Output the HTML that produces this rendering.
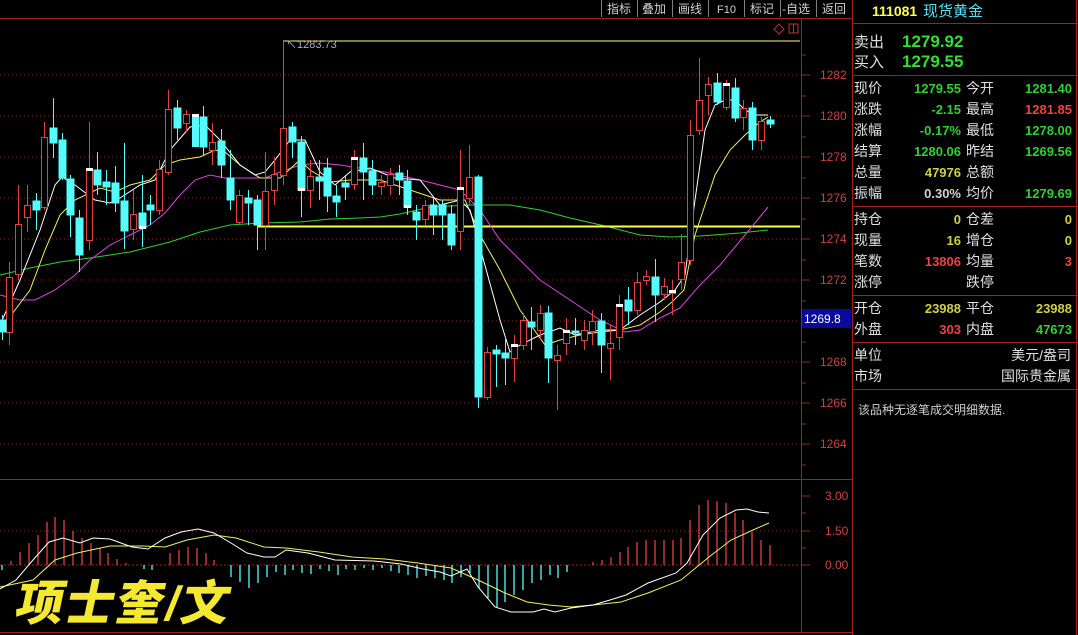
<!DOCTYPE html>
<html><head><meta charset="utf-8"><style>
html,body{margin:0;padding:0;background:#000;width:1078px;height:635px;overflow:hidden}
svg{display:block}
text{font-family:"Liberation Sans","Noto Sans CJK SC",sans-serif}
</style></head><body>
<svg width="1078" height="635" viewBox="0 0 1078 635" xmlns="http://www.w3.org/2000/svg">
<rect width="1078" height="635" fill="#000"/>
<!-- top menu -->
<g stroke="#808080" stroke-width="1">
<line x1="601.5" y1="0" x2="601.5" y2="17"/><line x1="637.5" y1="0" x2="637.5" y2="17"/><line x1="672.5" y1="0" x2="672.5" y2="17"/><line x1="708.5" y1="0" x2="708.5" y2="17"/><line x1="744.5" y1="0" x2="744.5" y2="17"/><line x1="780.5" y1="0" x2="780.5" y2="17"/><line x1="816.5" y1="0" x2="816.5" y2="17"/>
</g>
<g fill="#d0d0d0" font-size="12">
<text x="607" y="13">指标</text><text x="642" y="13">叠加</text><text x="678" y="13">画线</text><text x="717" y="13" font-size="11">F10</text><text x="750" y="13">标记</text><text x="782" y="13">-自选</text><text x="822" y="13">返回</text>
</g>
<line x1="0" y1="18.5" x2="852" y2="18.5" stroke="#a02020"/>
<!-- small icons -->
<path d="M779 24 L784 29 L779 34 L774 29 Z" fill="none" stroke="#c03030"/>
<rect x="789" y="24" width="9" height="9" fill="none" stroke="#c03030"/><line x1="793.5" y1="24" x2="793.5" y2="33" stroke="#c03030"/>
<!-- grid -->
<g stroke="#902020" stroke-dasharray="1,3">
<line x1="0" y1="75" x2="800" y2="75"/><line x1="0" y1="116" x2="800" y2="116"/><line x1="0" y1="157" x2="800" y2="157"/><line x1="0" y1="198" x2="800" y2="198"/><line x1="0" y1="239" x2="800" y2="239"/><line x1="0" y1="280" x2="800" y2="280"/><line x1="0" y1="321" x2="800" y2="321"/><line x1="0" y1="362" x2="800" y2="362"/><line x1="0" y1="403" x2="800" y2="403"/><line x1="0" y1="444" x2="800" y2="444"/>
<line x1="0" y1="531" x2="800" y2="531"/>
</g>
<line x1="0" y1="565" x2="800" y2="565" stroke="#a02020" stroke-dasharray="2,2"/>
<!-- axes -->
<line x1="801.5" y1="19" x2="801.5" y2="633" stroke="#a02020"/>
<line x1="0" y1="479.5" x2="852" y2="479.5" stroke="#a02020"/>
<line x1="0" y1="632.5" x2="852" y2="632.5" stroke="#a02020"/>
<g stroke="#a02020">
<line x1="801" y1="55" x2="806" y2="55"/><line x1="801" y1="75" x2="810" y2="75"/><line x1="801" y1="96" x2="806" y2="96"/><line x1="801" y1="116" x2="810" y2="116"/><line x1="801" y1="137" x2="806" y2="137"/><line x1="801" y1="157" x2="810" y2="157"/><line x1="801" y1="178" x2="806" y2="178"/><line x1="801" y1="198" x2="810" y2="198"/><line x1="801" y1="219" x2="806" y2="219"/><line x1="801" y1="239" x2="810" y2="239"/><line x1="801" y1="260" x2="806" y2="260"/><line x1="801" y1="280" x2="810" y2="280"/><line x1="801" y1="301" x2="806" y2="301"/><line x1="801" y1="342" x2="806" y2="342"/><line x1="801" y1="362" x2="810" y2="362"/><line x1="801" y1="383" x2="806" y2="383"/><line x1="801" y1="403" x2="810" y2="403"/><line x1="801" y1="424" x2="806" y2="424"/><line x1="801" y1="444" x2="810" y2="444"/><line x1="801" y1="465" x2="806" y2="465"/>
<line x1="801" y1="496" x2="810" y2="496"/><line x1="801" y1="513" x2="806" y2="513"/><line x1="801" y1="531" x2="810" y2="531"/><line x1="801" y1="548" x2="806" y2="548"/><line x1="801" y1="565" x2="810" y2="565"/>
</g>
<g fill="#d04040" font-size="12">
<text x="820" y="79">1282</text><text x="820" y="120">1280</text><text x="820" y="161">1278</text><text x="820" y="202">1276</text><text x="820" y="243">1274</text><text x="820" y="284">1272</text><text x="820" y="366">1268</text><text x="820" y="407">1266</text><text x="820" y="448">1264</text>
<text x="825" y="500">3.00</text><text x="825" y="535">1.50</text><text x="825" y="569">0.00</text>
</g>
<rect x="802" y="309" width="49" height="19" fill="#0a0a9a"/>
<text x="804" y="323" fill="#fff" font-size="12">1269.8</text>

<!-- MA lines -->
<polyline fill="none" stroke="#30d030" stroke-width="1" points="0,275 30,268 60,262 90,258 130,252 150,247 170,242 200,232 230,225 260,223 300,222 330,219 360,218 380,217 400,214 430,207 470,205 510,205 540,210 570,218 605,226 640,235 670,237 700,236 740,233 768,230"/>
<line x1="258" y1="226.5" x2="800" y2="226.5" stroke="#ffff40" stroke-width="2"/>
<polyline fill="none" stroke="#ffff60" stroke-width="1" points="283,41 800,41"/>
<line x1="283.5" y1="40" x2="283.5" y2="128" stroke="#e04040"/>
<text x="286" y="48" fill="#b0b0b0" font-size="11">↖1283.73</text>
<polyline fill="none" stroke="#e040e0" points="0,295 20,300 35,300 55,290 75,275 90,260 110,245 130,235 150,225 165,213 180,195 195,180 210,175 225,178 245,178 265,178 280,172 300,165 320,163 340,165 360,168 385,172 420,180 460,190 480,210 500,240 540,280 570,300 600,320 625,332 640,330 660,318 680,308 700,285 720,265 745,235 768,207"/>
<polyline fill="none" stroke="#f0f060" points="0,330 30,290 45,250 60,215 75,200 100,188 115,192 130,185 150,180 165,165 180,160 200,157 215,150 225,152 240,165 260,178 280,178 300,160 310,170 330,182 350,180 380,180 410,190 440,200 465,200 480,235 500,270 520,310 545,345 560,340 580,335 600,332 620,330 640,325 660,312 672,302 684,290 695,235 715,175 730,150 745,135 760,122 768,117"/>
<polyline fill="none" stroke="#ffffff" points="0,325 20,280 40,230 55,185 62,177 75,185 95,200 110,203 120,198 140,185 155,180 170,150 190,127 205,125 220,140 240,165 255,175 265,172 275,160 290,140 305,140 320,172 335,185 350,172 370,168 395,178 420,180 440,205 460,200 470,210 478,240 500,320 510,352 520,345 540,335 560,328 575,335 600,330 620,330 640,315 660,302 675,290 685,275 695,200 705,130 715,105 725,100 735,100 745,110 755,115 768,115"/>

<!-- candles: red hollow -->
<g stroke="#e04040" fill="#000">
<line x1="9.5" y1="262" x2="9.5" y2="345"/><rect x="6.5" y="277.5" width="6" height="55"/>
<line x1="18.5" y1="185" x2="18.5" y2="280"/><rect x="15.5" y="224.5" width="6" height="50"/>
<line x1="27.5" y1="185" x2="27.5" y2="232"/><rect x="24.5" y="205.5" width="6" height="12"/>
<line x1="44.5" y1="122" x2="44.5" y2="210"/><rect x="41.5" y="137.5" width="6" height="70"/>
<line x1="89.5" y1="122" x2="89.5" y2="250"/><rect x="86.5" y="168.5" width="6" height="72"/>
<line x1="133.5" y1="190" x2="133.5" y2="240"/><rect x="130.5" y="214.5" width="6" height="15"/>
<line x1="159.5" y1="160" x2="159.5" y2="215"/><rect x="156.5" y="169.5" width="6" height="41"/>
<line x1="168.5" y1="90" x2="168.5" y2="175"/><rect x="165.5" y="109.5" width="6" height="63"/>
<line x1="186.5" y1="110" x2="186.5" y2="132"/><rect x="183.5" y="114.5" width="6" height="9"/>
<line x1="212.5" y1="123" x2="212.5" y2="165"/><rect x="209.5" y="142.5" width="6" height="8"/>
<line x1="239.5" y1="190" x2="239.5" y2="225"/><rect x="236.5" y="195.5" width="6" height="27"/>
<line x1="265.5" y1="152" x2="265.5" y2="250"/><rect x="262.5" y="191.5" width="6" height="34"/>
<line x1="274.5" y1="157" x2="274.5" y2="205"/><rect x="271.5" y="174.5" width="6" height="16"/>
<rect x="280.5" y="128.5" width="6" height="47"/><line x1="283.5" y1="176" x2="283.5" y2="185"/>
<line x1="310.5" y1="160" x2="310.5" y2="208"/><rect x="307.5" y="176.5" width="6" height="14"/>
<line x1="354.5" y1="150" x2="354.5" y2="190"/><rect x="351.5" y="157.5" width="6" height="27"/>
<line x1="381.5" y1="175" x2="381.5" y2="195"/><rect x="378.5" y="182.5" width="6" height="4"/>
<line x1="390.5" y1="168" x2="390.5" y2="195"/><rect x="387.5" y="174.5" width="6" height="11"/>
<line x1="425.5" y1="200" x2="425.5" y2="225"/><rect x="422.5" y="205.5" width="6" height="14"/>
<line x1="460.5" y1="150" x2="460.5" y2="250"/><rect x="457.5" y="187.5" width="6" height="44"/>
<line x1="469.5" y1="145" x2="469.5" y2="205"/><rect x="466.5" y="177.5" width="6" height="21"/>
<line x1="487.5" y1="347" x2="487.5" y2="400"/><rect x="484.5" y="352.5" width="6" height="45"/>
<line x1="514.5" y1="335" x2="514.5" y2="382"/><rect x="511.5" y="344.5" width="6" height="14"/>
<line x1="523.5" y1="313" x2="523.5" y2="350"/><rect x="520.5" y="320.5" width="6" height="25"/>
<line x1="540.5" y1="305" x2="540.5" y2="340"/><rect x="537.5" y="313.5" width="6" height="17"/>
<line x1="557.5" y1="345" x2="557.5" y2="410"/><rect x="554.5" y="355.5" width="6" height="5"/>
<line x1="566.5" y1="318" x2="566.5" y2="355"/><rect x="563.5" y="330.5" width="6" height="13"/>
<line x1="584.5" y1="320" x2="584.5" y2="350"/><rect x="581.5" y="330.5" width="6" height="10"/>
<line x1="592.5" y1="310" x2="592.5" y2="345"/><rect x="589.5" y="321.5" width="6" height="10"/>
<line x1="610.5" y1="325" x2="610.5" y2="380"/><rect x="607.5" y="343.5" width="6" height="5"/>
<line x1="619.5" y1="295" x2="619.5" y2="350"/><rect x="616.5" y="304.5" width="6" height="33"/>
<line x1="637.5" y1="272" x2="637.5" y2="315"/><rect x="634.5" y="282.5" width="6" height="28"/>
<line x1="646.5" y1="270" x2="646.5" y2="285"/><rect x="643.5" y="276.5" width="6" height="4"/>
<line x1="664.5" y1="278" x2="664.5" y2="300"/><rect x="661.5" y="286.5" width="6" height="8"/>
<line x1="672.5" y1="280" x2="672.5" y2="315"/><rect x="669.5" y="290.5" width="6" height="3"/>
<line x1="681.5" y1="234" x2="681.5" y2="290"/><rect x="678.5" y="262.5" width="6" height="17"/>
<line x1="690.5" y1="120" x2="690.5" y2="265"/><rect x="687.5" y="135.5" width="6" height="125"/>
<line x1="699.5" y1="58" x2="699.5" y2="135"/><rect x="696.5" y="100.5" width="6" height="30"/>
<line x1="708.5" y1="77" x2="708.5" y2="115"/><rect x="705.5" y="84.5" width="6" height="11"/>
<line x1="726.5" y1="80" x2="726.5" y2="110"/><rect x="723.5" y="83.5" width="6" height="24"/>
<line x1="743.5" y1="100" x2="743.5" y2="130"/><rect x="740.5" y="108.5" width="6" height="9"/>
<line x1="761.5" y1="117" x2="761.5" y2="150"/><rect x="758.5" y="121.5" width="6" height="19"/>
</g>
<!-- candles: cyan filled -->
<g stroke="#54fcfc" fill="#54fcfc">
<line x1="2.5" y1="315" x2="2.5" y2="340"/><rect x="-1" y="320" width="7" height="12"/>
<line x1="36.5" y1="193" x2="36.5" y2="230"/><rect x="33" y="201" width="7" height="9"/>
<line x1="53.5" y1="98" x2="53.5" y2="158"/><rect x="50" y="128" width="7" height="15"/>
<line x1="62.5" y1="133" x2="62.5" y2="180"/><rect x="59" y="140" width="7" height="38"/>
<line x1="70.5" y1="175" x2="70.5" y2="237"/><rect x="67" y="179" width="7" height="36"/>
<line x1="79.5" y1="210" x2="79.5" y2="272"/><rect x="76" y="218" width="7" height="37"/>
<line x1="97.5" y1="152" x2="97.5" y2="195"/><rect x="94" y="170" width="7" height="15"/>
<line x1="106.5" y1="170" x2="106.5" y2="205"/><rect x="103" y="182" width="7" height="5"/>
<line x1="115.5" y1="166" x2="115.5" y2="212"/><rect x="112" y="183" width="7" height="20"/>
<line x1="124.5" y1="143" x2="124.5" y2="249"/><rect x="121" y="201" width="7" height="30"/>
<line x1="142.5" y1="175" x2="142.5" y2="247"/><rect x="139" y="213" width="7" height="15"/>
<line x1="150.5" y1="195" x2="150.5" y2="225"/><rect x="147" y="205" width="7" height="5"/>
<line x1="177.5" y1="100" x2="177.5" y2="140"/><rect x="174" y="108" width="7" height="20"/>
<line x1="203.5" y1="106" x2="203.5" y2="155"/><rect x="200" y="117" width="7" height="30"/>
<line x1="221.5" y1="129" x2="221.5" y2="178"/><rect x="218" y="141" width="7" height="24"/>
<line x1="230.5" y1="150" x2="230.5" y2="210"/><rect x="227" y="178" width="7" height="22"/>
<line x1="248.5" y1="190" x2="248.5" y2="225"/><rect x="245" y="198" width="7" height="5"/>
<line x1="257.5" y1="195" x2="257.5" y2="250"/><rect x="254" y="200" width="7" height="25"/>
<line x1="292.5" y1="122" x2="292.5" y2="158"/><rect x="289" y="127" width="7" height="15"/>
<line x1="301.5" y1="136" x2="301.5" y2="217"/><rect x="298" y="142" width="7" height="48"/>
<line x1="319.5" y1="160" x2="319.5" y2="200"/><rect x="316" y="177" width="7" height="4"/>
<line x1="327.5" y1="158" x2="327.5" y2="212"/><rect x="324" y="168" width="7" height="28"/>
<line x1="336.5" y1="185" x2="336.5" y2="217"/><rect x="333" y="196" width="7" height="6"/>
<line x1="345.5" y1="175" x2="345.5" y2="200"/><rect x="342" y="183" width="7" height="4"/>
<line x1="363.5" y1="143" x2="363.5" y2="200"/><rect x="360" y="158" width="7" height="14"/>
<line x1="372.5" y1="160" x2="372.5" y2="195"/><rect x="369" y="171" width="7" height="14"/>
<line x1="399.5" y1="165" x2="399.5" y2="195"/><rect x="396" y="173" width="7" height="7"/>
<line x1="407.5" y1="170" x2="407.5" y2="215"/><rect x="404" y="181" width="7" height="26"/>
<line x1="416.5" y1="205" x2="416.5" y2="240"/><rect x="413" y="212" width="7" height="8"/>
<line x1="433.5" y1="198" x2="433.5" y2="235"/><rect x="430" y="205" width="7" height="10"/>
<line x1="442.5" y1="200" x2="442.5" y2="240"/><rect x="439" y="205" width="7" height="10"/>
<line x1="451.5" y1="205" x2="451.5" y2="250"/><rect x="448" y="214" width="7" height="31"/>
<line x1="478.5" y1="175" x2="478.5" y2="408"/><rect x="475" y="177" width="7" height="220"/>
<line x1="496.5" y1="345" x2="496.5" y2="387"/><rect x="493" y="350" width="7" height="4"/>
<line x1="505.5" y1="337" x2="505.5" y2="385"/><rect x="502" y="353" width="7" height="5"/>
<line x1="531.5" y1="307" x2="531.5" y2="350"/><rect x="528" y="322" width="7" height="5"/>
<line x1="548.5" y1="306" x2="548.5" y2="383"/><rect x="545" y="313" width="7" height="45"/>
<line x1="575.5" y1="318" x2="575.5" y2="345"/><rect x="572" y="331" width="7" height="2"/>
<line x1="601.5" y1="313" x2="601.5" y2="373"/><rect x="598" y="321" width="7" height="24"/>
<line x1="628.5" y1="287" x2="628.5" y2="325"/><rect x="625" y="300" width="7" height="11"/>
<line x1="655.5" y1="259" x2="655.5" y2="322"/><rect x="652" y="277" width="7" height="18"/>
<line x1="717.5" y1="73" x2="717.5" y2="105"/><rect x="714" y="83" width="7" height="19"/>
<line x1="735.5" y1="78" x2="735.5" y2="122"/><rect x="732" y="88" width="7" height="30"/>
<line x1="752.5" y1="102" x2="752.5" y2="150"/><rect x="749" y="108" width="7" height="32"/>
<line x1="770.5" y1="116" x2="770.5" y2="128"/><rect x="767" y="120" width="7" height="4"/>
</g>
<g fill="#fff">
<rect x="86" y="168" width="7" height="3"/><rect x="139" y="226" width="7" height="3"/><rect x="192" y="114" width="7" height="3"/><rect x="298" y="188" width="7" height="3"/><rect x="351" y="157" width="7" height="3"/><rect x="404" y="205" width="7" height="3"/><rect x="457" y="187" width="7" height="3"/><rect x="511" y="344" width="7" height="3"/><rect x="563" y="330" width="7" height="3"/><rect x="616" y="304" width="7" height="3"/><rect x="669" y="290" width="7" height="3"/><rect x="723" y="83" width="7" height="3"/>
</g>
<rect x="192" y="114" width="7" height="33" fill="#54fcfc"/><rect x="192" y="114" width="7" height="3" fill="#fff"/>

<!-- MACD histogram -->
<g stroke-width="1.3">
<g stroke="#e04040">
<line x1="11" y1="565" x2="11" y2="561"/><line x1="20" y1="565" x2="20" y2="552"/><line x1="29" y1="565" x2="29" y2="543"/><line x1="38" y1="565" x2="38" y2="535"/><line x1="47" y1="565" x2="47" y2="522"/><line x1="55" y1="565" x2="55" y2="517"/><line x1="64" y1="565" x2="64" y2="520"/><line x1="73" y1="565" x2="73" y2="531"/><line x1="82" y1="565" x2="82" y2="538"/><line x1="91" y1="565" x2="91" y2="543"/><line x1="100" y1="565" x2="100" y2="548"/><line x1="108" y1="565" x2="108" y2="553"/><line x1="117" y1="565" x2="117" y2="559"/><line x1="126" y1="565" x2="126" y2="563"/>
<line x1="170" y1="565" x2="170" y2="553"/><line x1="179" y1="565" x2="179" y2="550"/><line x1="188" y1="565" x2="188" y2="547"/><line x1="197" y1="565" x2="197" y2="548"/><line x1="206" y1="565" x2="206" y2="553"/><line x1="214" y1="565" x2="214" y2="560"/>
<line x1="593" y1="565" x2="593" y2="562"/><line x1="602" y1="565" x2="602" y2="560"/><line x1="611" y1="565" x2="611" y2="557"/><line x1="620" y1="565" x2="620" y2="552"/><line x1="628" y1="565" x2="628" y2="547"/><line x1="637" y1="565" x2="637" y2="542"/><line x1="646" y1="565" x2="646" y2="540"/><line x1="655" y1="565" x2="655" y2="540"/><line x1="664" y1="565" x2="664" y2="540"/><line x1="673" y1="565" x2="673" y2="540"/><line x1="681" y1="565" x2="681" y2="538"/><line x1="690" y1="565" x2="690" y2="520"/><line x1="699" y1="565" x2="699" y2="505"/><line x1="708" y1="565" x2="708" y2="500"/><line x1="717" y1="565" x2="717" y2="501"/><line x1="726" y1="565" x2="726" y2="503"/><line x1="735" y1="565" x2="735" y2="513"/><line x1="743" y1="565" x2="743" y2="520"/><line x1="752" y1="565" x2="752" y2="532"/><line x1="761" y1="565" x2="761" y2="540"/><line x1="770" y1="565" x2="770" y2="545"/>
</g>
<g stroke="#54fcfc">
<line x1="2" y1="565" x2="2" y2="570"/><line x1="144" y1="565" x2="144" y2="569"/><line x1="152" y1="565" x2="152" y2="570"/>
<line x1="231" y1="565" x2="231" y2="577"/><line x1="240" y1="565" x2="240" y2="582"/><line x1="249" y1="565" x2="249" y2="588"/><line x1="258" y1="565" x2="258" y2="583"/><line x1="267" y1="565" x2="267" y2="577"/><line x1="276" y1="565" x2="276" y2="572"/><line x1="285" y1="565" x2="285" y2="575"/><line x1="293" y1="565" x2="293" y2="570"/><line x1="302" y1="565" x2="302" y2="573"/><line x1="311" y1="565" x2="311" y2="574"/><line x1="320" y1="565" x2="320" y2="569"/><line x1="329" y1="565" x2="329" y2="571"/><line x1="338" y1="565" x2="338" y2="575"/><line x1="346" y1="565" x2="346" y2="569"/><line x1="355" y1="565" x2="355" y2="570"/><line x1="364" y1="565" x2="364" y2="568"/><line x1="373" y1="565" x2="373" y2="570"/><line x1="382" y1="565" x2="382" y2="568"/><line x1="391" y1="565" x2="391" y2="571"/><line x1="399" y1="565" x2="399" y2="573"/><line x1="408" y1="565" x2="408" y2="575"/><line x1="417" y1="565" x2="417" y2="578"/><line x1="426" y1="565" x2="426" y2="576"/><line x1="435" y1="565" x2="435" y2="578"/><line x1="444" y1="565" x2="444" y2="580"/><line x1="452" y1="565" x2="452" y2="583"/><line x1="461" y1="565" x2="461" y2="577"/><line x1="470" y1="565" x2="470" y2="573"/>
<line x1="479" y1="565" x2="479" y2="588"/><line x1="488" y1="565" x2="488" y2="598"/><line x1="497" y1="565" x2="497" y2="607"/><line x1="505" y1="565" x2="505" y2="602"/><line x1="514" y1="565" x2="514" y2="595"/><line x1="523" y1="565" x2="523" y2="590"/><line x1="532" y1="565" x2="532" y2="583"/><line x1="541" y1="565" x2="541" y2="580"/><line x1="550" y1="565" x2="550" y2="575"/><line x1="558" y1="565" x2="558" y2="578"/><line x1="567" y1="565" x2="567" y2="572"/>
</g>
</g>
<polyline fill="none" stroke="#f0f060" points="0,587 33,580 55,560 77,553 110,546 143,546 165,547 187,540 214,535 236,538 264,547 286,548 319,552 352,557 385,559 418,563 451,568 478,580 505,593 527,602 549,605 571,607 593,605 621,602 648,593 681,580 709,557 731,540 753,530 769,523"/>
<polyline fill="none" stroke="#ffffff" points="0,589 16,580 33,560 49,542 63,538 80,543 93,538 110,539 132,547 148,549 165,538 181,532 198,529 214,533 231,543 247,553 264,557 275,557 286,550 308,553 335,560 374,561 401,564 423,569 440,572 451,576 467,569 478,587 495,607 511,612 533,612 544,609 555,612 571,608 593,605 610,600 626,595 648,583 676,573 687,563 703,535 720,518 736,510 747,509 758,512 769,513"/>

<!-- signature -->
<text x="20" y="620" font-family="'Noto Serif CJK SC','WenQuanYi Zen Hei',serif" font-weight="900" font-size="48" fill="#f5e830" transform="skewX(-12) translate(125,0)" letter-spacing="2">项士奎/文</text>

<!-- right panel -->
<g stroke="#a02020">
<line x1="852.5" y1="0" x2="852.5" y2="635"/><line x1="1076.5" y1="0" x2="1076.5" y2="635"/>
<line x1="852" y1="23.5" x2="1078" y2="23.5"/><line x1="852" y1="75.5" x2="1078" y2="75.5"/><line x1="852" y1="206.5" x2="1078" y2="206.5"/><line x1="852" y1="295.5" x2="1078" y2="295.5"/><line x1="852" y1="342.5" x2="1078" y2="342.5"/><line x1="852" y1="389.5" x2="1078" y2="389.5"/>
</g>
<text x="872" y="16" fill="#ffff50" font-size="14" font-weight="bold">111081</text>
<text x="923" y="16" fill="#54e0f0" font-size="15">现货黄金</text>
<g font-size="15" fill="#e0e0e0">
<text x="854" y="47">卖出</text><text x="854" y="67">买入</text>
</g>
<g font-size="17" font-weight="bold" fill="#30e030">
<text x="902" y="47">1279.92</text><text x="902" y="67">1279.55</text>
</g>
<g font-size="14" fill="#e0e0e0">
<text x="854" y="93">现价</text><text x="966" y="93">今开</text>
<text x="854" y="114">涨跌</text><text x="966" y="114">最高</text>
<text x="854" y="135">涨幅</text><text x="966" y="135">最低</text>
<text x="854" y="156">结算</text><text x="966" y="156">昨结</text>
<text x="854" y="177">总量</text><text x="966" y="177">总额</text>
<text x="854" y="198">振幅</text><text x="966" y="198">均价</text>
<text x="854" y="224">持仓</text><text x="966" y="224">仓差</text>
<text x="854" y="245">现量</text><text x="966" y="245">增仓</text>
<text x="854" y="266">笔数</text><text x="966" y="266">均量</text>
<text x="854" y="287">涨停</text><text x="966" y="287">跌停</text>
<text x="854" y="313">开仓</text><text x="966" y="313">平仓</text>
<text x="854" y="334">外盘</text><text x="966" y="334">内盘</text>
<text x="854" y="360">单位</text><text x="1071" y="360" text-anchor="end">美元/盎司</text>
<text x="854" y="381">市场</text><text x="1071" y="381" text-anchor="end">国际贵金属</text>
</g>
<g font-size="13" font-weight="bold" text-anchor="end">
<text x="961" y="93" fill="#30d030">1279.55</text><text x="1072" y="93" fill="#30d030">1281.40</text>
<text x="961" y="114" fill="#30d030">-2.15</text><text x="1072" y="114" fill="#f04040">1281.85</text>
<text x="961" y="135" fill="#30d030">-0.17%</text><text x="1072" y="135" fill="#30d030">1278.00</text>
<text x="961" y="156" fill="#30d030">1280.06</text><text x="1072" y="156" fill="#30d030">1269.56</text>
<text x="961" y="177" fill="#d0d040">47976</text>
<text x="961" y="198" fill="#d0d0d0">0.30%</text><text x="1072" y="198" fill="#30d030">1279.69</text>
<text x="961" y="224" fill="#d0d040">0</text><text x="1072" y="224" fill="#d0d040">0</text>
<text x="961" y="245" fill="#d0d040">16</text><text x="1072" y="245" fill="#d0d040">0</text>
<text x="961" y="266" fill="#f04040">13806</text><text x="1072" y="266" fill="#f04040">3</text>
<text x="961" y="313" fill="#d0d040">23988</text><text x="1072" y="313" fill="#d0d040">23988</text>
<text x="961" y="334" fill="#f04040">303</text><text x="1072" y="334" fill="#30d030">47673</text>
</g>
<text x="858" y="414" font-size="12" fill="#d0d0d0">该品种无逐笔成交明细数据.</text>
</svg>
</body></html>
